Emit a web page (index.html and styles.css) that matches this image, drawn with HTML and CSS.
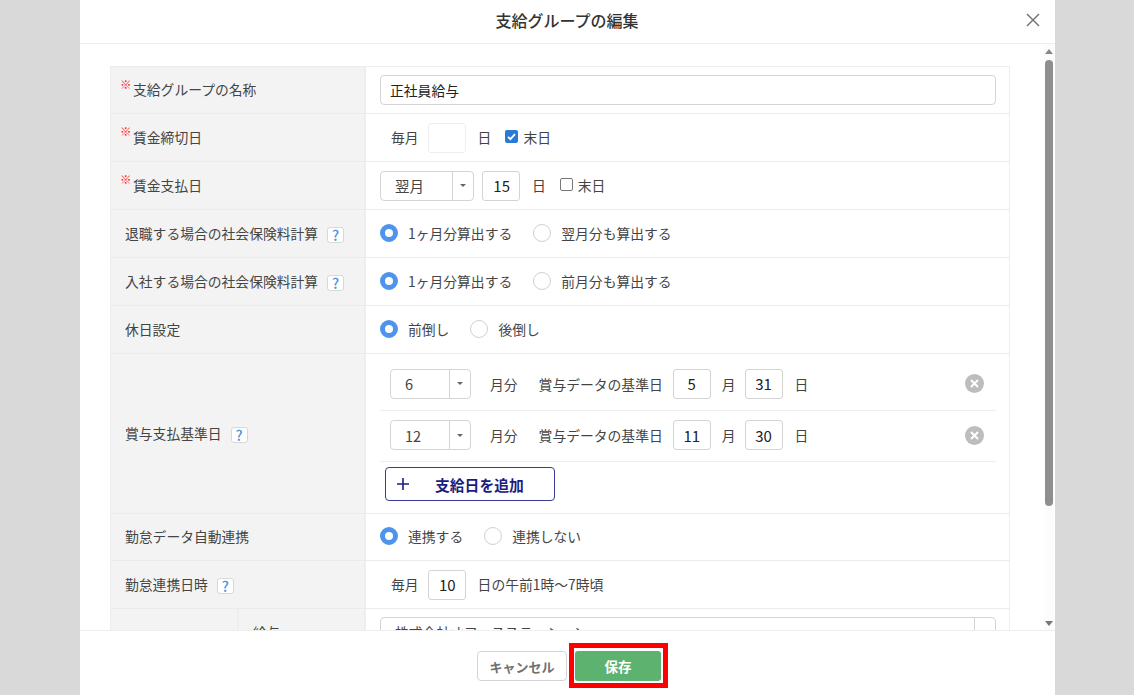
FILE: index.html
```html
<!DOCTYPE html>
<html lang="ja">
<head>
<meta charset="utf-8">
<title>支給グループの編集</title>
<link rel="stylesheet" href="styles.css">
</head>
<body>
<div class="modal">
  <header class="modal-head">
    <h1 class="modal-title">支給グループの編集</h1>
    <button class="close" aria-label="閉じる"><svg width="14" height="14" viewBox="0 0 14 14"><path d="M1 1l12 12M13 1L1 13" stroke="#777" stroke-width="1.5" fill="none"/></svg></button>
  </header>
  <div class="modal-main">
    <div class="scroll">
      <div class="form">
        <div class="row h47">
          <div class="label req"><span class="mark">※</span>支給グループの名称</div>
          <div class="cell"><div class="input wide">正社員給与</div></div>
        </div>
        <div class="row">
          <div class="label req"><span class="mark">※</span>賃金締切日</div>
          <div class="cell indent">
            <span>毎月</span><span class="box faint g-input"></span><span class="g-unit">日</span>
            <span class="check on g-check"><svg width="13" height="13" viewBox="0 0 13 13"><path d="M3 6.8l2.4 2.4L10 4.2" stroke="#fff" stroke-width="1.8" fill="none"/></svg></span><span class="g-chlabel">末日</span>
          </div>
        </div>
        <div class="row">
          <div class="label req"><span class="mark">※</span>賃金支払日</div>
          <div class="cell">
            <div class="select w94"><span class="sel-text">翌月</span><span class="sel-btn"><i class="caret"></i></span></div>
            <span class="box g-8">15</span><span class="g-unit">日</span>
            <span class="check g-check2"></span><span class="g-chlabel">末日</span>
          </div>
        </div>
        <div class="row">
          <div class="label">退職する場合の社会保険料計算<span class="help">?</span></div>
          <div class="cell">
            <span class="radio on"></span><span class="r-label">1ヶ月分算出する</span>
            <span class="radio g-21"></span><span class="r-label">翌月分も算出する</span>
          </div>
        </div>
        <div class="row">
          <div class="label">入社する場合の社会保険料計算<span class="help">?</span></div>
          <div class="cell">
            <span class="radio on"></span><span class="r-label">1ヶ月分算出する</span>
            <span class="radio g-21"></span><span class="r-label">前月分も算出する</span>
          </div>
        </div>
        <div class="row">
          <div class="label">休日設定</div>
          <div class="cell">
            <span class="radio on"></span><span class="r-label">前倒し</span>
            <span class="radio g-21"></span><span class="r-label">後倒し</span>
          </div>
        </div>
        <div class="row bonus-row">
          <div class="label">賞与支払基準日<span class="help">?</span></div>
          <div class="bonus">
            <div class="bonus-line">
              <div class="select w81"><span class="sel-text">6</span><span class="sel-btn"><i class="caret"></i></span></div>
              <span class="g-19">月分</span><span class="g-21">賞与データの基準日</span>
              <span class="box num g-10">5</span><span class="g-11">月</span><span class="box num g-9">31</span><span class="g-12">日</span>
              <span class="remove"><svg width="19" height="19" viewBox="0 0 19 19"><circle cx="9.5" cy="9.5" r="9.5" fill="#bdbdbd"/><path d="M6 6l7 7M13 6l-7 7" stroke="#fff" stroke-width="2" fill="none"/></svg></span>
            </div>
            <div class="bonus-line">
              <div class="select w81"><span class="sel-text">12</span><span class="sel-btn"><i class="caret"></i></span></div>
              <span class="g-19">月分</span><span class="g-21">賞与データの基準日</span>
              <span class="box num g-10">11</span><span class="g-11">月</span><span class="box num g-9">30</span><span class="g-12">日</span>
              <span class="remove"><svg width="19" height="19" viewBox="0 0 19 19"><circle cx="9.5" cy="9.5" r="9.5" fill="#bdbdbd"/><path d="M6 6l7 7M13 6l-7 7" stroke="#fff" stroke-width="2" fill="none"/></svg></span>
            </div>
            <button class="add"><svg width="12" height="12" viewBox="0 0 12 12"><path d="M6 0v12M0 6h12" stroke="#1c1c80" stroke-width="1.6" fill="none"/></svg><span class="add-text">支給日を追加</span></button>
          </div>
        </div>
        <div class="row h47">
          <div class="label">勤怠データ自動連携</div>
          <div class="cell">
            <span class="radio on"></span><span class="r-label">連携する</span>
            <span class="radio g-21"></span><span class="r-label">連携しない</span>
          </div>
        </div>
        <div class="row">
          <div class="label">勤怠連携日時<span class="help">?</span></div>
          <div class="cell indent">
            <span>毎月</span><span class="box g-input">10</span><span class="g-unit">日の午前1時〜7時頃</span>
          </div>
        </div>
        <div class="row split">
          <div class="label-a"></div>
          <div class="label-b">給与</div>
          <div class="cell top">
            <div class="select full"><span class="sel-text plain">株式会社オフィスステーション</span><span class="sel-btn"><i class="caret"></i></span></div>
          </div>
        </div>
      </div>
    </div>
    <div class="scrollbar">
      <i class="arrow up"></i>
      <div class="track"><div class="thumb"></div></div>
      <i class="arrow down"></i>
    </div>
  </div>
  <footer class="modal-foot">
    <button class="cancel">キャンセル</button>
    <div class="highlight"><button class="save">保存</button></div>
  </footer>
</div>
</body>
</html>
```

FILE: styles.css
```css
* { box-sizing: border-box; }
html, body { height: 100%; margin: 0; }
body {
  background: #d9d9d9;
  overflow: hidden;
  font-family: "Noto Sans CJK JP", "Noto Sans", sans-serif;
  font-size: 13.8px;
  color: #444;
}
.modal {
  width: 975px;
  height: 695px;
  margin-left: 80px;
  background: #fff;
  display: flex;
  flex-direction: column;
}
.modal-head {
  height: 44px;
  flex: none;
  display: flex;
  align-items: center;
  justify-content: center;
  border-bottom: 1px solid #eee;
  position: relative;
}
.modal-title { margin: 0 1px 3px 0; font-size: 16px; font-weight: 500; color: #333; }
.close {
  position: absolute;
  right: 15px;
  top: 13px;
  width: 14px;
  height: 14px;
  padding: 0;
  border: 0;
  background: none;
  display: flex;
}
.modal-main { flex: 1; min-height: 0; display: flex; }
.scroll { flex: 1; overflow: hidden; padding: 22px 34px 0 30px; }
.form { width: 900px; border: 1px solid #eee; border-bottom: 0; }
.row { display: flex; height: 48px; border-bottom: 1px solid #ebebeb; }
.row.h47 { height: 47px; }
.label {
  width: 255px;
  flex: none;
  background: #f3f3f3;
  border-right: 2px solid #eee;
  display: flex;
  align-items: center;
  padding: 0 0 2px 14px;
  white-space: nowrap;
}
.label.req { padding-left: 9px; }
.mark { color: #f22; font-size: 11.5px; font-weight: 500; width: 13px; flex: none; align-self: center; margin-top: -11px; }
.help {
  width: 17px;
  height: 16px;
  margin-left: 9px;
  margin-top: 5px;
  border: 1px solid #d8d8d8;
  border-radius: 3px;
  background: #fff;
  color: #4a90e2;
  font-size: 14.5px;
  font-weight: 500;
  display: inline-flex;
  align-items: center;
  justify-content: center;
  line-height: 1;
}
.cell { flex: 1; display: flex; align-items: center; padding: 0 13px 2px 14px; white-space: nowrap; min-width: 0; }
.cell.indent { padding-left: 25px; }
.cell.top { align-items: flex-start; padding-top: 8px; }
.cell > .input, .cell > .box, .cell > .select { margin-top: 2px; }
.cell.top > .select { margin-top: 0; }
.input {
  height: 30px;
  border: 1.5px solid #d4d4d4;
  border-radius: 4px;
  display: flex;
  align-items: center;
  padding: 0 0 1px 9px;
  color: #222;
}
.input.wide { width: 100%; }
.box {
  width: 38px;
  height: 30px;
  flex: none;
  border: 1.5px solid #d4d4d4;
  border-radius: 3px;
  display: inline-flex;
  align-items: center;
  justify-content: flex-end;
  padding-right: 9px;
  color: #222;
  font-size: 15px;
}
.box.num { justify-content: center; padding-right: 0; }
.box.faint { border: 1px solid #eee; }
.g-input { margin-left: 9px; }
.g-unit { margin-left: 12px; }
.g-check { margin-left: 14px; }
.g-check2 { margin-left: 14px; }
.g-chlabel { margin-left: 5px; }
.g-8 { margin-left: 8px; }
.g-9 { margin-left: 9px; }
.g-10 { margin-left: 10px; }
.g-11 { margin-left: 11px; }
.g-12 { margin-left: 12px; }
.g-19 { margin-left: 19px; }
.g-21 { margin-left: 21px; }
.select {
  height: 30px;
  flex: none;
  border: 1.5px solid #d4d4d4;
  border-radius: 4px;
  display: flex;
  align-items: stretch;
}
.select.w94 { width: 94px; }
.select.w81 { width: 81px; }
.select.full { width: 100%; }
.sel-text { flex: 1; display: flex; align-items: center; padding-left: 14px; color: #444; font-size: 14.5px; }
.sel-text.plain { font-size: 13.8px; }
.sel-btn { width: 21px; flex: none; border-left: 1.5px solid #d4d4d4; display: flex; align-items: center; justify-content: center; }
.caret { width: 0; height: 0; border: 3px solid transparent; border-top-color: #666; border-bottom: 0; }
.check {
  width: 13px;
  height: 13px;
  flex: none;
  border: 1.5px solid #777;
  border-radius: 2px;
  background: #fff;
  display: inline-flex;
}
.check.on { border: 0; background: #2a7bd1; }
.radio {
  width: 18px;
  height: 18px;
  flex: none;
  border-radius: 50%;
  border: 1.5px solid #d0d0d0;
  background: #fff;
}
.radio.on { border: 5.5px solid #4f94ec; }
.r-label { margin-left: 10px; }
.bonus-row { height: 160px; }
.bonus { flex: 1; padding: 5px 13px 0 14px; }
.bonus-line {
  height: 52px;
  border-bottom: 1.5px solid #eee;
  display: flex;
  align-items: center;
  padding: 0 0 2px 10px;
  white-space: nowrap;
}
.bonus-line + .bonus-line { height: 51px; }
.remove { margin-left: auto; margin-right: 12px; display: flex; }
.add {
  margin: 5px 0 0 5px;
  width: 170px;
  height: 34px;
  padding: 0 0 0 11px;
  border: 1.5px solid #3b3b95;
  border-radius: 4px;
  background: #fff;
  display: flex;
  align-items: center;
  font: inherit;
}
.add-text { margin-left: 26px; color: #1c1c80; font-size: 14.8px; font-weight: 700; }
.split { height: 60px; }
.label-a { width: 128px; flex: none; background: #f3f3f3; border-right: 2px solid #eee; }
.label-b { width: 127px; flex: none; background: #f3f3f3; border-right: 2px solid #eee; padding: 13px 0 0 14px; }
.scrollbar { width: 10px; flex: none; margin-right: 1px; background: #fcfcfc; display: flex; flex-direction: column; align-items: center; }
.arrow { width: 0; height: 0; border: 4px solid transparent; flex: none; }
.arrow.up { border-top: 0; border-bottom: 5px solid #888; margin-top: 5px; }
.arrow.down { border-bottom: 0; border-top: 5px solid #777; margin-bottom: 4px; }
.track { flex: 1; width: 8px; padding-top: 6px; }
.thumb { height: 446px; background: #8f8f8f; border-radius: 4px; }
.modal-foot {
  height: 65px;
  flex: none;
  border-top: 1px solid #eee;
  display: flex;
  align-items: flex-start;
  padding: 12px 0 0 397px;
  gap: 2px;
}
.cancel {
  width: 90px;
  height: 30px;
  margin-top: 8px;
  border: 1.5px solid #d4d4d4;
  border-radius: 4px;
  background: #fff;
  color: #707070;
  font: 700 13px "Noto Sans CJK JP", sans-serif;
  padding: 0;
}
.highlight { border: 5px solid #f00; padding: 3px 2px 2px 1px; height: 45px; width: 99px; display: flex; background: #fff; }
.save {
  width: 86px;
  height: 30px;
  border: 0;
  border-radius: 3px;
  background: #5cb26e;
  color: #fff;
  font: 700 13.5px "Noto Sans CJK JP", sans-serif;
  padding: 0;
}
```
